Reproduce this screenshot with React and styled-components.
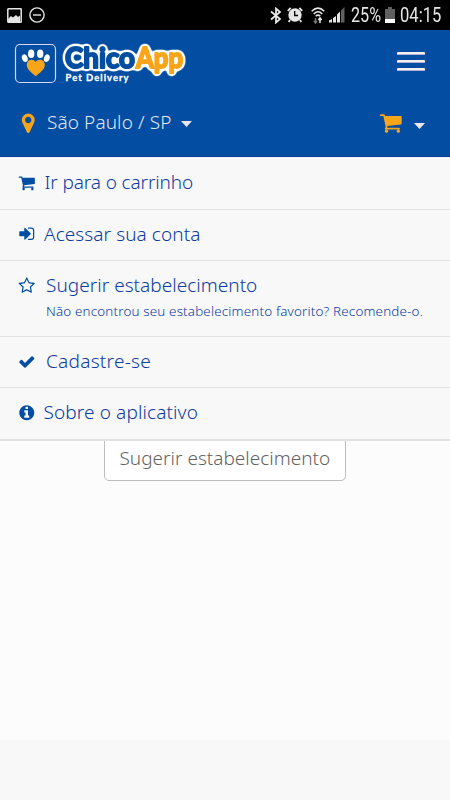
import React from 'react';
import styled, { createGlobalStyle } from 'styled-components';

const GlobalStyle = createGlobalStyle`
  * { box-sizing: border-box; }
  body { margin: 0; background: #f8f8f8; }
`;

const glyphs = {
  cart: 'M704 1536q0 52-38 90t-90 38-90-38-38-90 38-90 90-38 90 38 38 90zm896 0q0 52-38 90t-90 38-90-38-38-90 38-90 90-38 90 38 38 90zm128-1088v512q0 24-16.5 42.5t-40.5 21.5l-1044 122q13 60 13 70 0 16-24 64h920q26 0 45 19t19 45-19 45-45 19h-1024q-26 0-45-19t-19-45q0-11 8-31.5t16-36 21.5-40 15.5-29.5l-177-823h-204q-26 0-45-19t-19-45 19-45 45-19h256q16 0 28.5 6.5t19.5 15.5 13 24.5 8 26 5.5 29.5 4.5 26h1201q26 0 45 19t19 45z',
  pin: 'M1152 640q0-106-75-181t-181-75-181 75-75 181 75 181 181 75 181-75 75-181zm256 0q0 109-33 179l-364 774q-16 33-47.5 52t-67.5 19-67.5-19-46.5-52l-365-774q-33-70-33-179 0-212 150-362t362-150 362 150 150 362z',
  check: 'M1671 566q0 40-28 68l-724 724-136 136q-28 28-68 28t-68-28l-136-136-362-362q-28-28-28-68t28-68l136-136q28-28 68-28t68 28l294 295 656-657q28-28 68-28t68 28l136 136q28 28 28 68z',
  info: 'M1152 1376v-160q0-14-9-23t-23-9h-96v-512q0-14-9-23t-23-9h-320q-14 0-23 9t-9 23v160q0 14 9 23t23 9h96v320h-96q-14 0-23 9t-9 23v160q0 14 9 23t23 9h448q14 0 23-9t9-23zm-128-896v-160q0-14-9-23t-23-9h-192q-14 0-23 9t-9 23v160q0 14 9 23t23 9h192q14 0 23-9t9-23zm640 416q0 209-103 385.5t-279.5 279.5-385.5 103-385.5-103-279.5-279.5-103-385.5 103-385.5 279.5-279.5 385.5-103 385.5 103 279.5 279.5 103 385.5z',
  star: 'M1201 1004l306-297-422-62-189-382-189 382-422 62 306 297-73 421 378-199 377 199zm527-357q0 22-26 48l-363 354 86 500q1 7 1 20 0 50-41 50-19 0-40-12l-449-236-449 236q-22 12-40 12-21 0-31.5-14.5t-10.5-35.5q0-6 2-20l86-500-364-354q-25-27-25-48 0-37 56-46l502-73 225-455q19-41 49-41t49 41l225 455 502 73q56 9 56 46z',
  signIn: 'M1312 896q0 26-19 45l-544 544q-19 19-45 19t-45-19-19-45v-288h-448q-26 0-45-19t-19-45v-384q0-26 19-45t45-19h448v-288q0-26 19-45t45-19 45 19l544 544q19 19 19 45zm352-352v704q0 119-84.5 203.5t-203.5 84.5h-320q-13 0-22.5-9.5t-9.5-22.5q0-4-1-20t-.5-26.5 3-23.5 10-19.5 20.5-6.5h320q66 0 113-47t47-113v-704q0-66-47-113t-113-47h-312l-11.5-1-11.5-3-8-5.5-7-9-2-13.5q0-4-1-20t-.5-26.5 3-23.5 10-19.5 20.5-6.5h320q119 0 203.5 84.5t84.5 203.5z',
};

const Screen = styled.div`
  width: 450px;
  height: 800px;
  display: flex;
  flex-direction: column;
  overflow: hidden;
  background: #f8f8f8;
  font-family: 'Noto Sans', 'Open Sans', sans-serif;
  font-weight: 300;
`;

const StatusBar = styled.div`
  height: 30px;
  flex: none;
  padding: 0 8px 0 7px;
  display: flex;
  align-items: center;
  justify-content: space-between;
  background: #000;
  color: #e6e6e6;
`;

const StatusGroup = styled.div`
  display: flex;
  align-items: center;
  height: 30px;
`;

const StatusIcon = styled.svg`
  display: block;
  flex: none;
  margin-right: ${(p) => p.$gap || 0}px;
`;

const StatusText = styled.span`
  width: ${(p) => p.$width}px;
  padding-top: 1px;
  font: 400 19.5px/30px Roboto, sans-serif;
  white-space: nowrap;
  transform: scaleX(${(p) => p.$squeeze});
  transform-origin: left center;
`;

const Header = styled.header`
  height: 127px;
  flex: none;
  background: #034ea2;
  border-bottom: 1px solid #0a3f98;
`;

const BrandRow = styled.div`
  height: 68px;
  padding: 4px 25px 0 14px;
  display: flex;
  justify-content: space-between;
  align-items: flex-start;
`;

const Logo = styled.svg`
  display: block;
`;

const MenuButton = styled.button`
  width: 28px;
  height: 19px;
  margin: 18px 0 0;
  padding: 0;
  border: 0;
  background: none;
  display: flex;
  flex-direction: column;
  justify-content: space-between;
`;

const MenuLine = styled.span`
  width: 28px;
  height: 3px;
  border-radius: 1px;
  background: #f2f0f0;
  border-bottom: 1px solid #b4b0dc;
`;

const LocationRow = styled.div`
  height: 50px;
  padding: 0 25px 0 17px;
  display: flex;
  align-items: center;
  justify-content: space-between;
`;

const Picker = styled.div`
  display: flex;
  align-items: center;
`;

const City = styled.span`
  width: 134px;
  margin: -2px 0 0 7.5px;
  color: #e4e7f2;
  font-size: 19px;
  line-height: 26px;
  letter-spacing: ${(p) => p.$spacing}px;
  white-space: nowrap;
`;

const Caret = styled.svg`
  display: block;
  margin-left: ${(p) => p.$gap || 0}px;
  margin-top: ${(p) => p.$drop || 0}px;
`;

const GlyphSvg = styled.svg`
  display: block;
  flex: none;
  fill: ${(p) => p.$color};
`;

const Main = styled.main`
  position: relative;
  height: 583px;
  flex: none;
  display: flex;
  justify-content: center;
  align-items: flex-start;
  background: #fcfcfc;
`;

const Dropdown = styled.nav`
  position: absolute;
  top: 0;
  left: 0;
  right: 0;
  background: #f8f8f8;
  border-bottom: 2px solid #e2e2e2;
`;

const MenuItem = styled.a`
  height: ${(p) => p.$height}px;
  padding: 11px 0 0 18px;
  display: flex;
  align-items: flex-start;
  color: #0b3ba0;
  border-top: 1px solid ${(p) => (p.$first ? '#f0f0f6' : '#e3e3e3')};
`;

const ItemIcon = styled.span`
  width: ${(p) => p.$width}px;
  padding-top: ${(p) => p.$drop}px;
  flex: none;
`;

const ItemTitle = styled.div`
  font-size: 19px;
  line-height: 26px;
  margin-top: ${(p) => p.$shift || 0}px;
  letter-spacing: ${(p) => p.$spacing}px;
  white-space: nowrap;
`;

const ItemHint = styled.div`
  font-size: 13.4px;
  line-height: 18px;
  margin-top: 4px;
  letter-spacing: ${(p) => p.$spacing}px;
  white-space: nowrap;
`;

const SuggestButton = styled.button`
  width: 242px;
  height: 48px;
  margin-top: 276px;
  padding: 2px 0 0 14.5px;
  border: 1px solid #bdbdbd;
  border-radius: 5px;
  background: #fff;
  color: #636363;
  font: 300 19px/26px 'Noto Sans', 'Open Sans', sans-serif;
  text-align: left;
  white-space: nowrap;
`;

function Glyph({ name, size, color = '#034ea2' }) {
  return (
    <GlyphSvg width={size} height={size} viewBox="0 0 1792 1792" $color={color}>
      <path d={glyphs[name]} />
    </GlyphSvg>
  );
}

function ChicoLogo() {
  const word = {
    fontFamily: 'Lato, sans-serif',
    fontWeight: 700,
    fontSize: 28.5,
    strokeWidth: 2,
    strokeLinejoin: 'round',
    lengthAdjust: 'spacingAndGlyphs',
  };
  return (
    <Logo width="178" height="54" viewBox="14 34 178 54">
      <defs>
        <filter id="halo" filterUnits="userSpaceOnUse" x="56" y="36" width="140" height="52" colorInterpolationFilters="sRGB">
          <feGaussianBlur in="SourceAlpha" stdDeviation="2" />
          <feComponentTransfer result="shape">
            <feFuncA type="linear" slope="9" intercept="-0.6" />
          </feComponentTransfer>
          <feFlood floodColor="#fff" />
          <feComposite in2="shape" operator="in" result="outline" />
          <feMerge>
            <feMergeNode in="outline" />
            <feMergeNode in="SourceGraphic" />
          </feMerge>
        </filter>
      </defs>
      <rect x="15.5" y="44.5" width="40" height="38" rx="4.5" fill="none" stroke="#d6d8f0" strokeWidth="1.2" />
      <g fill="#fff">
        <ellipse cx="24.8" cy="58.2" rx="2.8" ry="3.9" transform="rotate(-20 24.8 58.2)" />
        <ellipse cx="31.2" cy="53.8" rx="3.2" ry="4.3" />
        <ellipse cx="40.2" cy="53.8" rx="3.2" ry="4.3" />
        <ellipse cx="46.8" cy="58.2" rx="2.8" ry="3.9" transform="rotate(20 46.8 58.2)" />
      </g>
      <path d="M35.7 76.3C32 73 26.8 69.5 26.8 65C26.8 59.6 33 58.2 35.7 62C38.4 58.2 44.8 59.6 44.8 65C44.8 69.5 39.5 73 35.7 76.3Z" fill="#f9a51a" />
      <g filter="url(#halo)">
        <text {...word} x="65" y="68" textLength="70" fill="#034ea2" stroke="#034ea2">Chico</text>
        <text {...word} x="136" y="68" textLength="47" fill="#f9a51a" stroke="#f9a51a">App</text>
      </g>
      <text x="65.5" y="80.8" textLength="63" fill="#fff" stroke="#fff" strokeWidth=".3" fontFamily="Lato, sans-serif" fontWeight="700" fontSize="9.4">Pet Delivery</text>
    </Logo>
  );
}

const items = [
  { icon: 'cart', label: 'Ir para o carrinho', iconWidth: 26.5, drop: 5, height: 52, spacing: -0.12 },
  { icon: 'signIn', label: 'Acessar sua conta', iconWidth: 26, drop: 4, height: 51, spacing: 0.08, shift: -0.5 },
  { icon: 'star', label: 'Sugerir estabelecimento', iconWidth: 28, drop: 5, height: 76, spacing: 0.03, shift: -0.5, hint: 'Não encontrou seu estabelecimento favorito? Recomende-o.' },
  { icon: 'check', label: 'Cadastre-se', iconWidth: 28, drop: 5, height: 51, spacing: 0.27 },
  { icon: 'info', label: 'Sobre o aplicativo', iconWidth: 25.5, drop: 5, height: 52, spacing: 0.12 },
];

export default function App() {
  return (
    <Screen>
      <GlobalStyle />
      <StatusBar>
        <StatusGroup>
          <StatusIcon width="15" height="15" $gap={7}>
            <rect x=".8" y=".8" width="13.4" height="13.4" rx=".5" fill="none" stroke="#e6e6e6" strokeWidth="1.5" />
            <path d="M1 11L4 8L6 9.5L9 7L11 9L13 7.5V14H1Z" fill="#e6e6e6" />
          </StatusIcon>
          <StatusIcon width="16" height="16" fill="none" stroke="#e6e6e6" strokeWidth="1.4">
            <circle cx="8" cy="8" r="7.1" />
            <path d="M4 8H12" />
          </StatusIcon>
        </StatusGroup>
        <StatusGroup>
          <StatusIcon width="12" height="17" $gap={5} fill="none" stroke="#e6e6e6" strokeWidth="1.8">
            <path d="M1 4.5L10 12L6 15.5V1.5L10 5L1 12.5" />
          </StatusIcon>
          <StatusIcon width="16" height="16" $gap={8}>
            <circle cx="8" cy="8" r="6.7" fill="#e6e6e6" />
            <path d="M.8 3.8L3.7 .8M15.2 3.8L12.3 .8M3 13L1.7 15M13 13L14.3 15" stroke="#e6e6e6" strokeWidth="1.8" />
            <path d="M7.7 4V8.5H11" stroke="#000" strokeWidth="1.3" fill="none" />
          </StatusIcon>
          <StatusIcon width="14" height="17" $gap={4} fill="none" stroke="#e6e6e6" strokeWidth="1.5">
            <path d="M.7 4.3Q7-2 13.3 4.3M2.7 7Q7 2.5 11.3 7M4.7 9.3Q7 7 9.3 9.3" />
            <path d="M4.5 16V11M3 14L4.5 16L6 14" stroke="#777" />
            <path d="M9 16V11M7.3 13L9 11L10.7 13" />
          </StatusIcon>
          <StatusIcon width="16" height="16" $gap={6} fill="#e6e6e6">
            <path d="M0 13.5L3 12V15.5H0ZM4 11L7 9V15.5H4ZM8 7.5L11 4.5V15.5H8Z" />
            <path d="M12 3.5L15.5 0V15.5H12Z" fill="#606060" />
          </StatusIcon>
          <StatusText $width={34} $squeeze={0.83}>25%</StatusText>
          <StatusIcon width="10" height="16" $gap={5}>
            <path d="M3 0H7V2H10V12H0V2H3Z" fill="#606060" />
            <path d="M0 12H10V16H0Z" fill="#fff" />
          </StatusIcon>
          <StatusText $width={42} $squeeze={0.85}>04:15</StatusText>
        </StatusGroup>
      </StatusBar>
      <Header>
        <BrandRow>
          <ChicoLogo />
          <MenuButton aria-label="Menu">
            <MenuLine />
            <MenuLine />
            <MenuLine />
          </MenuButton>
        </BrandRow>
        <LocationRow>
          <Picker>
            <Glyph name="pin" size={22.5} color="#f9a51a" />
            <City $spacing={0.1}>São Paulo / SP</City>
            <Caret width="11" height="6" $drop={2}>
              <path d="M0 0H11L5.5 6Z" fill="#e4e7f2" />
            </Caret>
          </Picker>
          <Picker>
            <Glyph name="cart" size={23.5} color="#f9a51a" />
            <Caret width="11" height="6" $gap={12} $drop={6}>
              <path d="M0 0H11L5.5 6Z" fill="#eceaf0" />
            </Caret>
          </Picker>
        </LocationRow>
      </Header>
      <Main>
        <SuggestButton>Sugerir estabelecimento</SuggestButton>
        <Dropdown>
          {items.map((item, index) => (
            <MenuItem key={item.label} $height={item.height} $first={index === 0}>
              <ItemIcon $width={item.iconWidth} $drop={item.drop}>
                <Glyph name={item.icon} size={17.5} />
              </ItemIcon>
              <div>
                <ItemTitle $spacing={item.spacing} $shift={item.shift}>{item.label}</ItemTitle>
                {item.hint && <ItemHint $spacing={0.17}>{item.hint}</ItemHint>}
              </div>
            </MenuItem>
          ))}
        </Dropdown>
      </Main>
    </Screen>
  );
}
